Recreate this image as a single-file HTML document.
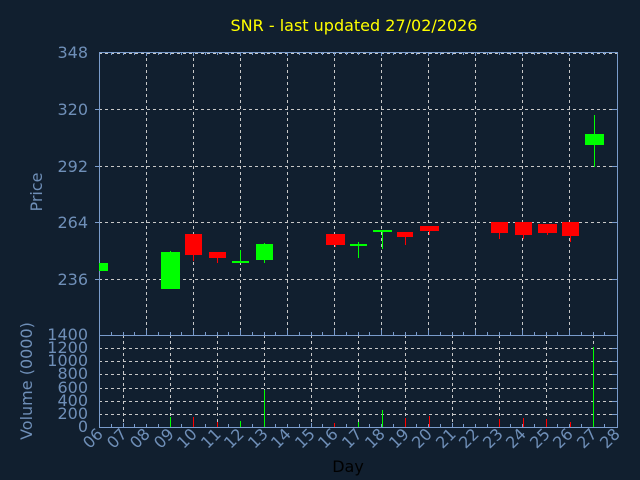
<!DOCTYPE html>
<html><head><meta charset="utf-8"><style>
html,body{margin:0;padding:0;background:#111f2f;}
svg{display:block;font-family:"DejaVu Sans","Liberation Sans",sans-serif;}
</style></head><body>
<svg width="640" height="480" viewBox="0 0 640 480" xmlns="http://www.w3.org/2000/svg">
<rect width="640" height="480" fill="#111f2f"/>
<text x="354" y="31" fill="#ffff00" font-size="16" text-anchor="middle">SNR - last updated 27/02/2026</text>

<g stroke="#c8c8c8" stroke-width="1" stroke-dasharray="3,3" fill="none">
<!-- price horizontal -->
<line x1="99" y1="53.5" x2="617" y2="53.5"/>
<line x1="99" y1="109.5" x2="617" y2="109.5"/>
<line x1="99" y1="166.5" x2="617" y2="166.5"/>
<line x1="99" y1="222.5" x2="617" y2="222.5"/>
<line x1="99" y1="279.5" x2="617" y2="279.5"/>
<!-- price vertical (even days) -->
<line x1="146.5" y1="52" x2="146.5" y2="335"/>
<line x1="193.5" y1="52" x2="193.5" y2="335"/>
<line x1="240.5" y1="52" x2="240.5" y2="335"/>
<line x1="287.5" y1="52" x2="287.5" y2="335"/>
<line x1="334.5" y1="52" x2="334.5" y2="335"/>
<line x1="381.5" y1="52" x2="381.5" y2="335"/>
<line x1="428.5" y1="52" x2="428.5" y2="335"/>
<line x1="475.5" y1="52" x2="475.5" y2="335"/>
<line x1="522.5" y1="52" x2="522.5" y2="335"/>
<line x1="569.5" y1="52" x2="569.5" y2="335"/>
<!-- volume horizontal -->
<line x1="99" y1="348.5" x2="617" y2="348.5"/>
<line x1="99" y1="361.5" x2="617" y2="361.5"/>
<line x1="99" y1="374.5" x2="617" y2="374.5"/>
<line x1="99" y1="388.5" x2="617" y2="388.5"/>
<line x1="99" y1="401.5" x2="617" y2="401.5"/>
<line x1="99" y1="414.5" x2="617" y2="414.5"/>
<!-- volume vertical (odd days) -->
<line x1="123.5" y1="335" x2="123.5" y2="427"/>
<line x1="170.5" y1="335" x2="170.5" y2="427"/>
<line x1="217.5" y1="335" x2="217.5" y2="427"/>
<line x1="264.5" y1="335" x2="264.5" y2="427"/>
<line x1="311.5" y1="335" x2="311.5" y2="427"/>
<line x1="358.5" y1="335" x2="358.5" y2="427"/>
<line x1="405.5" y1="335" x2="405.5" y2="427"/>
<line x1="452.5" y1="335" x2="452.5" y2="427"/>
<line x1="499.5" y1="335" x2="499.5" y2="427"/>
<line x1="546.5" y1="335" x2="546.5" y2="427"/>
<line x1="593.5" y1="335" x2="593.5" y2="427"/>
</g>

<!-- frame -->
<g stroke="#7a9ccc" stroke-width="1" fill="none">
<line x1="99.5" y1="52" x2="99.5" y2="428"/>
<line x1="99" y1="52.5" x2="618" y2="52.5"/>
<line x1="617.5" y1="52" x2="617.5" y2="428"/>
<line x1="99" y1="335.5" x2="618" y2="335.5"/>
<line x1="99" y1="427.5" x2="618" y2="427.5"/>
<!-- ticks price left -->
<line x1="95" y1="109.5" x2="99" y2="109.5"/>
<line x1="95" y1="166.5" x2="99" y2="166.5"/>
<line x1="95" y1="222.5" x2="99" y2="222.5"/>
<line x1="95" y1="279.5" x2="99" y2="279.5"/>
<!-- right ticks -->
<line x1="612" y1="109.5" x2="617" y2="109.5"/>
<line x1="612" y1="166.5" x2="617" y2="166.5"/>
<line x1="612" y1="222.5" x2="617" y2="222.5"/>
<line x1="612" y1="279.5" x2="617" y2="279.5"/>
<line x1="612" y1="348.5" x2="617" y2="348.5"/>
<line x1="612" y1="361.5" x2="617" y2="361.5"/>
<line x1="612" y1="374.5" x2="617" y2="374.5"/>
<line x1="612" y1="388.5" x2="617" y2="388.5"/>
<line x1="612" y1="401.5" x2="617" y2="401.5"/>
<line x1="612" y1="414.5" x2="617" y2="414.5"/>
</g>
<g stroke="#7a9ccc" stroke-width="1" id="tk">
<path d="M111.5 52v3M123.5 52v3M134.5 52v3M146.5 52v4M158.5 52v3M170.5 52v3M181.5 52v3M193.5 52v4M205.5 52v3M217.5 52v3M228.5 52v3M240.5 52v4M252.5 52v3M264.5 52v3M275.5 52v3M287.5 52v4M299.5 52v3M311.5 52v3M322.5 52v3M334.5 52v4M346.5 52v3M358.5 52v3M369.5 52v3M381.5 52v4M393.5 52v3M405.5 52v3M416.5 52v3M428.5 52v4M440.5 52v3M452.5 52v3M463.5 52v3M475.5 52v4M487.5 52v3M499.5 52v3M510.5 52v3M522.5 52v4M534.5 52v3M546.5 52v3M557.5 52v3M569.5 52v4M581.5 52v3M593.5 52v3M604.5 52v3"/>
<path d="M111.5 335v-3M123.5 335v-3M134.5 335v-3M146.5 335v-5M158.5 335v-3M170.5 335v-3M181.5 335v-3M193.5 335v-5M205.5 335v-3M217.5 335v-3M228.5 335v-3M240.5 335v-5M252.5 335v-3M264.5 335v-3M275.5 335v-3M287.5 335v-5M299.5 335v-3M311.5 335v-3M322.5 335v-3M334.5 335v-5M346.5 335v-3M358.5 335v-3M369.5 335v-3M381.5 335v-5M393.5 335v-3M405.5 335v-3M416.5 335v-3M428.5 335v-5M440.5 335v-3M452.5 335v-3M463.5 335v-3M475.5 335v-5M487.5 335v-3M499.5 335v-3M510.5 335v-3M522.5 335v-5M534.5 335v-3M546.5 335v-3M557.5 335v-3M569.5 335v-5M581.5 335v-3M593.5 335v-3M604.5 335v-3"/>
<path d="M111.5 427v-3M123.5 427v-4M134.5 427v-3M146.5 427v-3M158.5 427v-3M170.5 427v-4M181.5 427v-3M193.5 427v-3M205.5 427v-3M217.5 427v-4M228.5 427v-3M240.5 427v-3M252.5 427v-3M264.5 427v-4M275.5 427v-3M287.5 427v-3M299.5 427v-3M311.5 427v-4M322.5 427v-3M334.5 427v-3M346.5 427v-3M358.5 427v-4M369.5 427v-3M381.5 427v-3M393.5 427v-3M405.5 427v-4M416.5 427v-3M428.5 427v-3M440.5 427v-3M452.5 427v-4M463.5 427v-3M475.5 427v-3M487.5 427v-3M499.5 427v-4M510.5 427v-3M522.5 427v-3M534.5 427v-3M546.5 427v-4M557.5 427v-3M569.5 427v-3M581.5 427v-3M593.5 427v-4M604.5 427v-3"/>
</g>

<!-- candles -->
<g fill="#00ff00">
<rect x="99" y="263" width="9" height="8"/>
<rect x="170" y="251" width="1" height="2"/><rect x="161" y="252" width="19" height="37"/>
<rect x="240" y="250" width="1" height="13"/><rect x="232" y="261" width="17" height="2"/>
<rect x="264" y="243" width="1" height="20"/><rect x="256" y="244" width="17" height="16"/>
<rect x="358" y="242" width="1" height="16"/><rect x="350" y="244" width="17" height="2"/>
<rect x="382" y="230" width="1" height="19"/><rect x="373" y="230" width="19" height="2"/>
<rect x="594" y="115" width="1" height="52"/><rect x="585" y="134" width="19" height="11"/>
</g>
<g fill="#ff0000">
<rect x="193" y="234" width="1" height="27"/><rect x="185" y="234" width="17" height="21"/>
<rect x="217" y="252" width="1" height="11"/><rect x="209" y="252" width="17" height="6"/>
<rect x="335" y="234" width="1" height="13"/><rect x="326" y="234" width="19" height="11"/>
<rect x="405" y="232" width="1" height="13"/><rect x="397" y="232" width="16" height="5"/>
<rect x="429" y="226" width="1" height="9"/><rect x="420" y="226" width="19" height="5"/>
<rect x="499" y="222" width="1" height="17"/><rect x="491" y="222" width="17" height="11"/>
<rect x="523" y="222" width="1" height="17"/><rect x="515" y="222" width="17" height="13"/>
<rect x="547" y="224" width="1" height="11"/><rect x="538" y="224" width="19" height="9"/>
<rect x="570" y="222" width="1" height="20"/><rect x="562" y="222" width="17" height="14"/>
</g>

<!-- volume bars -->
<g fill="#00ff00">
<rect x="170" y="417" width="1" height="10"/>
<rect x="240" y="421" width="1" height="6"/>
<rect x="264" y="390" width="1" height="37"/>
<rect x="358" y="422" width="1" height="5"/>
<rect x="382" y="410" width="1" height="17"/>
<rect x="593" y="347" width="1" height="80"/>
</g>
<g fill="#ff0000">
<rect x="193" y="417" width="1" height="10"/>
<rect x="217" y="422" width="1" height="5"/>
<rect x="334" y="423" width="1" height="4"/>
<rect x="405" y="418" width="1" height="9"/>
<rect x="429" y="416" width="1" height="11"/>
<rect x="499" y="419" width="1" height="8"/>
<rect x="523" y="418" width="1" height="9"/>
<rect x="546" y="419" width="1" height="8"/>
<rect x="570" y="422" width="1" height="5"/>
</g>

<!-- axis labels -->
<g fill="#6f8fb8" font-size="16" text-anchor="end">
<text x="88" y="58">348</text>
<text x="88" y="115">320</text>
<text x="88" y="172">292</text>
<text x="88" y="228">264</text>
<text x="88" y="285">236</text>
<text x="88" y="340">1400</text>
<text x="88" y="353">1200</text>
<text x="88" y="366">1000</text>
<text x="88" y="379">800</text>
<text x="88" y="393">600</text>
<text x="88" y="406">400</text>
<text x="88" y="419">200</text>
<text x="88" y="432">0</text>
</g>
<text transform="translate(42,192) rotate(-90)" fill="#6f8fb8" font-size="16" text-anchor="middle">Price</text>
<text transform="translate(32,381) rotate(-90)" fill="#6f8fb8" font-size="16" text-anchor="middle">Volume (0000)</text>

<g fill="#6f8fb8" font-size="16" text-anchor="end">
<text transform="translate(104,435) rotate(-45)">06</text>
<text transform="translate(128,435) rotate(-45)">07</text>
<text transform="translate(151,435) rotate(-45)">08</text>
<text transform="translate(175,435) rotate(-45)">09</text>
<text transform="translate(198,435) rotate(-45)">10</text>
<text transform="translate(222,435) rotate(-45)">11</text>
<text transform="translate(245,435) rotate(-45)">12</text>
<text transform="translate(269,435) rotate(-45)">13</text>
<text transform="translate(292,435) rotate(-45)">14</text>
<text transform="translate(316,435) rotate(-45)">15</text>
<text transform="translate(339,435) rotate(-45)">16</text>
<text transform="translate(363,435) rotate(-45)">17</text>
<text transform="translate(386,435) rotate(-45)">18</text>
<text transform="translate(410,435) rotate(-45)">19</text>
<text transform="translate(433,435) rotate(-45)">20</text>
<text transform="translate(457,435) rotate(-45)">21</text>
<text transform="translate(480,435) rotate(-45)">22</text>
<text transform="translate(504,435) rotate(-45)">23</text>
<text transform="translate(527,435) rotate(-45)">24</text>
<text transform="translate(551,435) rotate(-45)">25</text>
<text transform="translate(574,435) rotate(-45)">26</text>
<text transform="translate(598,435) rotate(-45)">27</text>
<text transform="translate(621,435) rotate(-45)">28</text>
</g>
<text x="348" y="472" fill="#000000" font-size="16" text-anchor="middle">Day</text>
</svg>
</body></html>
